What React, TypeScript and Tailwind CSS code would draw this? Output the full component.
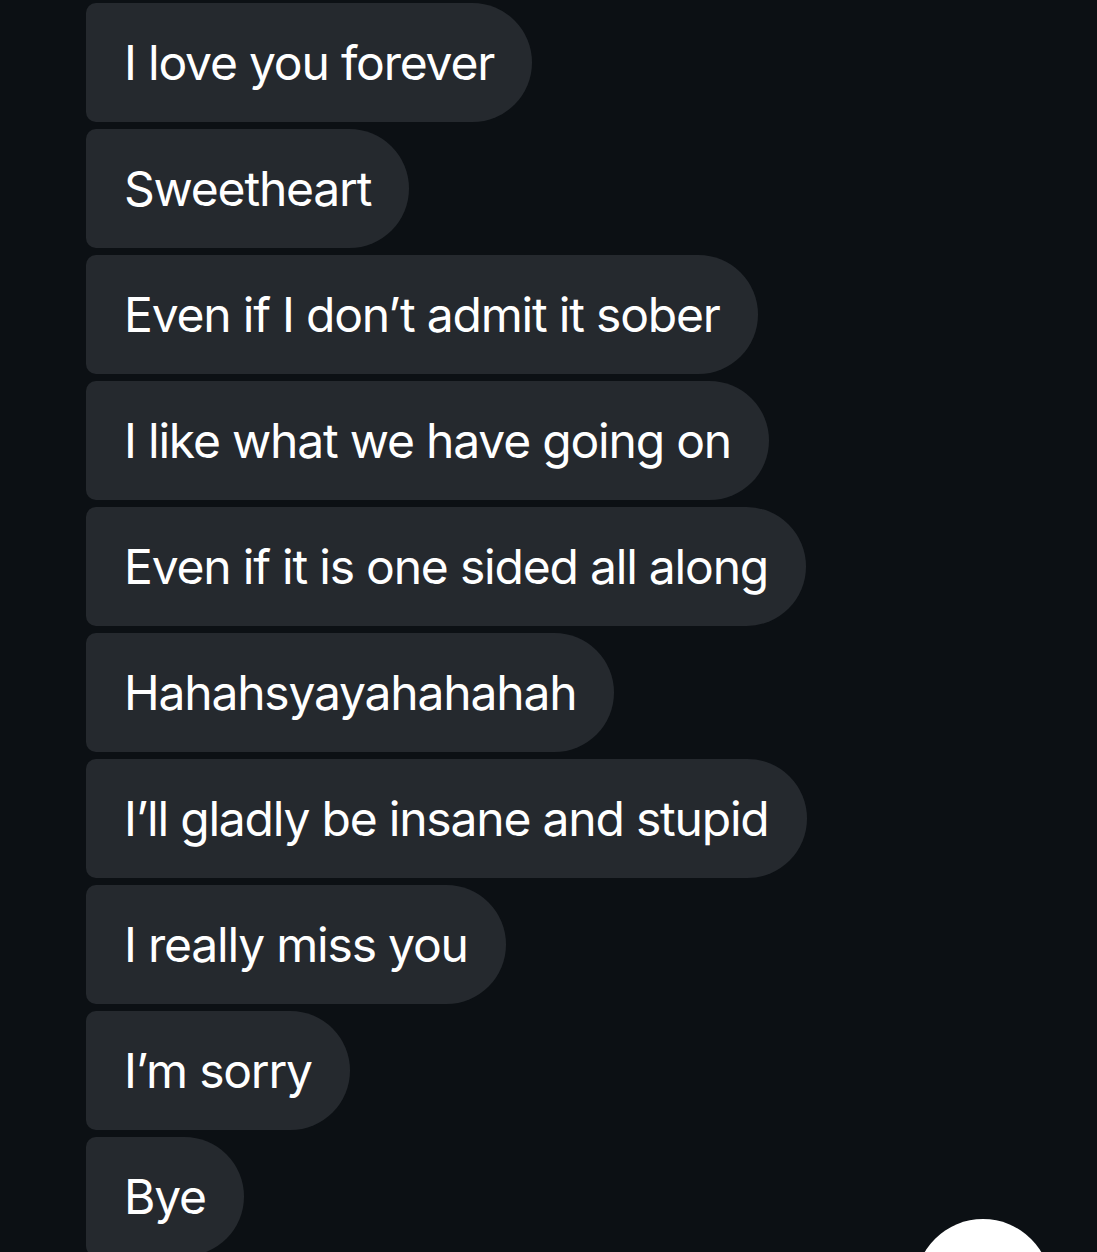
import React from "react";

const messages = [
  "I love you forever",
  "Sweetheart",
  "Even if I don\u2019t admit it sober",
  "I like what we have going on",
  "Even if it is one sided all along",
  "Hahahsyayahahahah",
  "I\u2019ll gladly be insane and stupid",
  "I really miss you",
  "I\u2019m sorry",
  "Bye",
];

export default function App() {
  return (
    <div className="relative h-[1252px] w-[1097px] overflow-hidden bg-[#0c1014]">
      <div className="flex flex-col items-start gap-[7px] pl-[86px] pt-[3px]">
        {messages.map((m, i) => (
          <div
            key={i}
            className="flex h-[119px] shrink-0 items-center rounded-l-[10px] rounded-r-[60px] bg-[#25292e] pl-[38px] pr-[38px] text-[48px] leading-none tracking-[-0.025em] text-white"
            style={{ fontFamily: "Inter, 'Noto Sans', sans-serif" }}
          >
            <span className="whitespace-nowrap">{m}</span>
          </div>
        ))}
      </div>
      <div className="absolute left-[915px] top-[1219px] h-[136px] w-[136px] rounded-full bg-white" />
    </div>
  );
}
